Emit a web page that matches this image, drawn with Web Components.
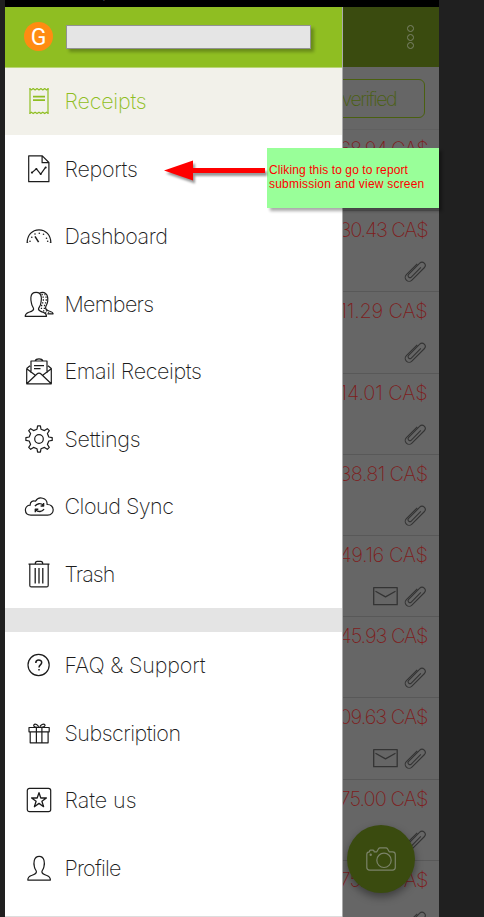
<!DOCTYPE html>
<html lang="en"><head><meta charset="utf-8"><title>Receipts</title>
<style>html,body{margin:0;height:917px;overflow:hidden;background:#202020}</style></head>
<body><app-screen></app-screen>
<script>
const define=(name,html,setup)=>customElements.define(name,class extends HTMLElement{
  connectedCallback(){
    if(this.shadowRoot)return;
    const r=this.attachShadow({mode:'open'});
    r.innerHTML=typeof html==='function'?html(this):html;
    if(setup)setup(this,r);
  }
});

const icons={
receipt:'<path d="M6 2.2v25.6M24 2.2v25.6" /><path d="M5.5 2.5l1.8 1.4 1.9-1.4 1.9 1.4L13 2.5l2 1.4 1.9-1.4 1.9 1.4 1.9-1.4 1.9 1.4 1.9-1.4M5.5 27.6l1.8-1.4 1.9 1.4 1.9-1.4 1.9 1.4 2-1.4 1.9 1.4 1.9-1.4 1.9 1.4 1.9-1.4 1.9 1.4"/><path stroke-width="1.7" d="M9 10.7h12M9 14.2h12"/>',
report:'<path d="M4.7 1.9h13.6l6.6 6.6v19.2H4.7zM18.1 2v6.7h6.8"/><path d="M8 18.6l4.4-3.8 4.3 5.4 5-7"/><g fill="currentColor" stroke="none"><circle cx="8" cy="18.6" r="1.1"/><circle cx="12.4" cy="15" r="1"/><circle cx="16.7" cy="20" r="1"/><circle cx="21.7" cy="13.4" r="1"/></g>',
dash:'<path d="M3.1 21.9c.2-7.7 5-13.1 11.9-13.1s11.700 5.400 11.900 13.100M3.1 21.600l1-.7M26.900 21.600l-1-.7"/><path stroke-width="1.500" d="M11 15.400l3.600 5.700"/><g fill="currentColor" stroke="none"><circle cx="6" cy="20.300" r=".8"/><circle cx="7.800" cy="16.200" r=".8"/><circle cx="11" cy="13" r=".8"/><circle cx="15.300" cy="12.200" r=".8"/><circle cx="19.500" cy="13.300" r=".8"/><circle cx="22.500" cy="17.200" r=".8"/><circle cx="23.700" cy="20.300" r=".8"/></g>',
members:'<path d="M1.200 27.300h21.300c0-2.100-.8-3.100-3.300-4-3.100-1.100-4.600-1.500-4.700-3.200 0-1.600 2-2.600 2.300-5.800.3-1.600 1-3.400.5-6.100-.4-3.100-2.200-4.900-5.200-4.900-3.100 0-4.900 1.800-5.200 4.900-.3 2.700.2 4.500.6 6.100.4 3.200 2.100 4.200 2.100 5.800-.1 1.700-1.700 2.100-4.800 3.200-2.400.9-3.600 1.900-3.600 4z"/><path d="M15.500 4.300c1.500-.8 4.500-.9 6.100.1 2.700 1.600 2.300 5.200 2.100 7.800-.2 2.700-1.600 3.700-2.100 6.100-.2 2 .6 2.900 3.300 3.700 2.900.8 4.200 1.200 4.200 2.800h-5.700"/><g stroke-width="1.300" stroke-dasharray="1.300 1.600"><path d="M17.500 5.500h4M18.500 8.200h5M18.700 11h4.500M18 13.800h4.500M17 16.500h4.500M16.800 19.300h4.500M19 21.900h5M21 23.900h6"/></g>',
email:'<path d="M2.700 12.500v15.300h24.600V12.500L24 9.700M2.700 12.500L6 9.700M7 17.100V5h16v12.100M11.200 4.800c1-2.700 6.600-2.700 7.600 0M2.700 12.800L11 19M27.300 12.800L19 19M3 27.500l9.700-9.300c1.500-1.300 3.100-1.300 4.600 0l9.700 9.300"/><path d="M10 9.600h10M10 12.600h6.500"/>',
gear:'<circle cx="15" cy="15" r="4.300"/><path d="M13 5.200l.6-3.300h2.800l.6 3.300 3.500 1.400 2.800-1.900 2 2-1.900 2.800 1.400 3.500 3.400.6v2.800l-3.400.6-1.400 3.500 1.900 2.800-2 2-2.800-1.900-3.500 1.400-.6 3.300h-2.800l-.6-3.300-3.500-1.400-2.800 1.900-2-2 1.900-2.800-1.400-3.500-3.300-.6v-2.800l3.300-.6 1.400-3.500-1.900-2.800 2-2 2.800 1.900z"/>',
cloud:'<path d="M6.900 24.200c-7.200 0-7.200-9.600-.7-10-.2-3.100 2.700-5.200 5.300-4 3.100-5.500 12-3.500 11.600 3.300 7.800-.5 8.200 10.700.5 10.700z"/><path stroke-width="1.400" d="M11 15.200c1.600-3 6-3.400 8.300-.9M19.600 12v3h-3M20 18c-1.600 3-6 3.400-8.300.9M11.300 21.200v-3h3"/>',
trash:'<path d="M4.500 5.200h21M11.200 5c.1-2 .5-2.600 2-2.600h3.600c1.500 0 1.900.6 2 2.600M5.800 5.400v21c0 1 .5 1.500 1.500 1.500h15.400c1 0 1.500-.5 1.500-1.500v-21"/><path stroke-width="1.300" d="M11.200 9v15.500M15 9v15.500M18.800 9v15.500"/>',
faq:'<circle cx="14.600" cy="15" r="10.600"/><path stroke-width="1.500" d="M11.800 12.900c0-3.900 5.900-3.700 5.900-.3 0 2.400-2.700 2.200-2.700 4.800M15 19v1.600"/>',
gift:'<path d="M5 9.500h20.200v4.300H5zM6.200 13.800h17.900v11H6.200zM12.400 9.500v15.300M17.900 9.500v15.300"/><path d="M13.200 9.400c-3-.4-4-1.200-3.300-2.500 1.100-1.800 4.300-.2 4.700 2.400M17 9.400c3-.4 4.600-1.200 3.900-2.500-1.100-1.800-4.700-.2-5.100 2.400"/>',
rate:'<rect x="3.300" y="3.300" width="23.400" height="23.400" rx="2.200"/><path stroke-width="1.300" d="M15 7.700l1.800 5.300h5.600l-4.500 3.300 1.700 5.400-4.600-3.300-4.600 3.300 1.700-5.400-4.500-3.300h5.600z"/>',
profile:'<path d="M3.800 27.100h22.600c0-2.500-.8-3.600-3.600-4.600-3-1-4.700-1.400-4.900-3.600-.1-1.400 1.400-2.200 2-5.100.6-2.300.7-4.300.1-6.500-.7-2.600-2.200-4-4.800-4s-4.200 1.400-4.900 4c-.6 2.200-.5 4.200.1 6.500.6 2.900 2.200 3.700 2 5.100-.2 2.200-2 2.600-5 3.600-2.800 1-3.600 2.100-3.600 4.600z"/>',
clip:'<path transform="translate(11 10.500) rotate(45)" stroke-width="1.100" d="M-3.900-7V8.300a3.900 3.900 0 0 0 7.800 0V-9.200a3.200 3.200 0 0 0-6.400 0V6.500a1.900 1.900 0 0 0 3.800 0V-7"/>',
mail:'<path stroke-width="1.300" d="M.7.7h23.500v17H.7zM2.500 4.200l10 5.700 10-5.700"/>',
camera:'<path d="M3.500 4.800c0-1 .4-1.700 1-1.700h2.600c.6 0 1 .7 1 1.700h2.700l1.700-3c.4-.7.7-.9 1.500-.9h6c.8 0 1.100.2 1.500.9l1.700 3h3.300c1.900 0 2.800.9 2.800 2.800v12.700c0 1.900-.9 2.800-2.800 2.800H3.600c-1.900 0-2.800-.9-2.800-2.800V7.600c0-1.900.9-2.800 2.700-2.800z"/><circle cx="18" cy="13.300" r="7.200"/><circle cx="4.700" cy="7.800" r=".6"/>'
};
const boxes={clip:[22,21],mail:[25,19],camera:[30,24]};
define('ui-icon',h=>{const n=h.getAttribute('name'),b=boxes[n]||[30,30];return `<style>:host{display:block;flex:none;width:${b[0]}px;height:${b[1]}px}svg{display:block;overflow:visible}</style><svg width="${b[0]}" height="${b[1]}" viewBox="0 0 ${b[0]} ${b[1]}" fill="none" stroke="currentColor" stroke-width="1.200" stroke-linejoin="round">${icons[n]}</svg>`});

/* A line of text tracked so that its advance equals the width attribute. */
define('fit-text',`<style>:host{display:block;white-space:nowrap;flex:none}span{display:inline-block}</style><span></span>`,(h,r)=>{
  const s=r.querySelector('span'),t=h.getAttribute('text');s.textContent=t;
  const w=+h.getAttribute('width'),n=s.getBoundingClientRect().width;
  s.style.letterSpacing=(w-n)/t.length+'px';
});

define('menu-item',h=>`<style>:host{display:flex;height:67.5px;flex:none;align-items:center;box-sizing:border-box;padding-left:18.700px;gap:10.800px;color:#1c1c1c}
:host([active]){background:#f2f1ea;color:#8fbe22}
fit-text{font:200 21.500px/30px Inter,"Liberation Sans",sans-serif}</style>
<ui-icon name="${h.getAttribute('icon')}"></ui-icon><fit-text text="${h.getAttribute('label').replace('&','&amp;')}" width="${h.getAttribute('w')}"></fit-text>`);

define('receipt-row',h=>`<style>:host{display:flex;flex-direction:column;align-items:flex-end;height:81.200px;flex:none;box-sizing:border-box;padding:6px 11.500px 0 0;border-bottom:1px solid #585858;color:#7e1d1d}
fit-text{font:200 20px/26px Inter,"Liberation Sans",sans-serif}
div{display:flex;gap:6px;margin-top:18px;margin-right:1.500px;align-items:center;color:#343434}</style>
<fit-text text="${h.getAttribute('amount')}" width="88"></fit-text><div>${h.hasAttribute('mail')?'<ui-icon name="mail"></ui-icon>':''}<ui-icon name="clip"></ui-icon></div>`);

define('receipt-list',`<style>:host{display:flex;flex-direction:column;width:434px;height:910px;background:#666;overflow:hidden}
header{height:60px;flex:none;background:#3a4b0f;display:flex;justify-content:flex-end;align-items:center;padding-right:25px;box-sizing:border-box}
.dots{display:grid;gap:1.500px}.dots i{width:5px;height:5px;border:1.300px solid #7b8369;border-radius:50%}
.filter{height:63px;flex:none;display:flex;justify-content:flex-end;padding:12px 14px 0 0;box-sizing:border-box;background:#666;border-bottom:1px solid #606060}
.filter div{box-sizing:border-box;width:170px;height:39px;border:1.500px solid #4a6010;border-radius:6px;display:flex;justify-content:flex-end;align-items:center;padding-right:28px}
fit-text{font:200 19.500px/26px Inter,"Liberation Sans",sans-serif;color:#4a6010}</style>
<header><div class="dots"><i></i><i></i><i></i></div></header>
<div class="filter"><div><fit-text text="verified" width="54.500"></fit-text></div></div>
${['68.94','30.43','11.29','14.01','38.81','49.16','45.93','09.63','75.00','75.00'].map(a=>`<receipt-row amount="${a} CA$" ${a=='49.16'||a=='09.63'?'mail':''}></receipt-row>`).join('')}`);

define('nav-drawer',`<style>:host{display:flex;flex-direction:column;width:338px;height:910px;background:#fff;box-sizing:border-box;border-right:1px solid #aaa}
header{height:60.500px;flex:none;display:flex;align-items:center;gap:13px;background:#8fbe22;padding-left:19px;border-bottom:1px solid #b9d574;box-sizing:border-box}
.avatar{width:29px;height:29px;border-radius:50%;background:#ff8c12;color:#fff;font:400 23px/32px Roboto,sans-serif;text-align:center}
.name{width:245px;height:24px;box-sizing:border-box;border:1px solid #929292;background:#e5e5e5;box-shadow:3px 3px 3px #0004}
.gap{height:24px;flex:none;background:#e4e4e4}.end{margin-top:14px;border-top:1px solid #ddd}</style>
<header><div class="avatar">G</div><div class="name"></div></header>
<menu-item active icon="receipt" label="Receipts" w="82"></menu-item>
<menu-item icon="report" label="Reports" w="73"></menu-item>
<menu-item icon="dash" label="Dashboard" w="103"></menu-item>
<menu-item icon="members" label="Members" w="89"></menu-item>
<menu-item icon="email" label="Email Receipts" w="137"></menu-item>
<menu-item icon="gear" label="Settings" w="76"></menu-item>
<menu-item icon="cloud" label="Cloud Sync" w="109"></menu-item>
<menu-item icon="trash" label="Trash" w="50"></menu-item>
<div class="gap"></div>
<menu-item icon="faq" label="FAQ & Support" w="141"></menu-item>
<menu-item icon="gift" label="Subscription" w="116"></menu-item>
<menu-item icon="rate" label="Rate us" w="72"></menu-item>
<menu-item icon="profile" label="Profile" w="56"></menu-item>
<div class="end"></div>`);

define('callout-note',`<style>:host{display:block}
.box{width:172px;height:60px;box-sizing:border-box;background:#9f9;box-shadow:3px 3px 3px #0005;padding:15px 2px;color:#f00;font:12px/14px "Liberation Sans",Arial,sans-serif}
svg{position:absolute;right:172px;top:8px;filter:drop-shadow(2px 3px 1px #0006)}</style>
<svg width="106" height="30"><path d="M3 14.500L32 4.500v7.500h72v5H32v7.500z" fill="#f00"/></svg>
<div class="box"><fit-text text="Cliking this to go to report" width="139"></fit-text><fit-text text="submission and view screen" width="155.500"></fit-text></div>`);

define('app-screen',`<style>:host{display:block;position:relative;width:484px;height:917px;padding-left:5px;box-sizing:border-box;overflow:hidden;background:#202020}
.status{height:7px;background:#000;overflow:hidden;color:#aaa;font:11px/12px Roboto,sans-serif;width:434px}
:host::before{content:"";position:absolute;inset:0 0 auto 0;height:7px;background:#000;left:5px;right:45px}
nav-drawer{position:absolute;left:5px;top:7px;z-index:1}
.fab{position:absolute;left:347px;top:825px;width:68px;height:68px;border-radius:50%;background:#3a4b0f;color:#7b8369;display:grid;place-items:center;box-shadow:0 4px 9px #0006}
callout-note{position:absolute;left:267px;top:148px;z-index:2}
.status span{position:absolute;left:97px;top:-9px}</style>
<div class="status"><span>0/0</span></div><receipt-list></receipt-list><div class="fab"><ui-icon name="camera"></ui-icon></div><nav-drawer></nav-drawer><callout-note></callout-note>`);
</script></body></html>
